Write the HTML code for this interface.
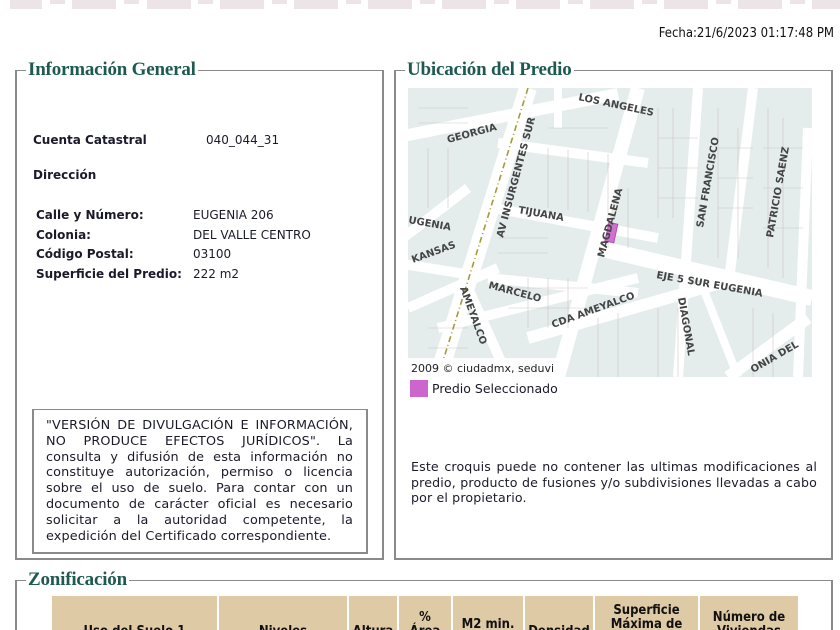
<!DOCTYPE html>
<html><head><meta charset="utf-8">
<style>
*{margin:0;padding:0;box-sizing:border-box}
html,body{width:840px;height:630px;overflow:hidden}
body{background:#fff;position:relative;font-family:"DejaVu Sans","Liberation Sans",sans-serif;font-size:12px;color:#1a1a2a}
.a{position:absolute}
.box{position:absolute;border:2px solid #8a8a8a;border-top-width:1px}
.lg{position:absolute;background:#fff;font-family:"Liberation Serif",serif;font-weight:bold;font-size:19px;color:#1e5a52;padding:0 2px;line-height:18px;letter-spacing:-0.2px}
.band{position:absolute;top:0;height:9px;background:#ece4e6}
b{font-weight:bold}
.j{text-align:justify;line-height:15.6px;font-size:12.6px}
th{background:#dfcaa6;font-family:"DejaVu Sans Condensed","DejaVu Sans",sans-serif;font-weight:bold;font-size:13px;color:#111;text-align:center;vertical-align:middle;line-height:14px}
</style></head><body>
<div class="band" style="left:10px;width:32px"></div>
<div class="band" style="left:50px;width:15px;height:4px"></div>
<div class="band" style="left:72px;width:44px"></div>
<div class="band" style="left:124px;width:15px;height:4px"></div>
<div class="band" style="left:147px;width:44px"></div>
<div class="band" style="left:198px;width:15px;height:4px"></div>
<div class="band" style="left:220px;width:44px"></div>
<div class="band" style="left:272px;width:15px;height:4px"></div>
<div class="band" style="left:294px;width:44px"></div>
<div class="band" style="left:346px;width:15px;height:4px"></div>
<div class="band" style="left:368px;width:44px"></div>
<div class="band" style="left:420px;width:15px;height:4px"></div>
<div class="band" style="left:442px;width:44px"></div>
<div class="band" style="left:494px;width:15px;height:4px"></div>
<div class="band" style="left:516px;width:44px"></div>
<div class="band" style="left:568px;width:15px;height:4px"></div>
<div class="band" style="left:590px;width:44px"></div>
<div class="band" style="left:642px;width:15px;height:4px"></div>
<div class="band" style="left:664px;width:44px"></div>
<div class="band" style="left:716px;width:15px;height:4px"></div>
<div class="band" style="left:738px;width:44px"></div>
<div class="band" style="left:790px;width:15px;height:4px"></div>
<div class="band" style="left:812px;width:28px"></div>

<div class="a" style="right:6px;top:26px;font-family:'DejaVu Sans Condensed','DejaVu Sans',sans-serif;font-size:13px;color:#111">Fecha:21/6/2023 01:17:48 PM</div>

<div class="box" style="left:15px;top:70px;width:369px;height:490px"></div>
<div class="lg" style="left:26px;top:61px">Información General</div>
<div class="box" style="left:394px;top:70px;width:439px;height:490px"></div>
<div class="lg" style="left:405px;top:61px">Ubicación del Predio</div>

<div class="a" style="left:33px;top:133px"><b>Cuenta Catastral</b></div>
<div class="a" style="left:206px;top:133px">040_044_31</div>
<div class="a" style="left:33px;top:168px"><b>Dirección</b></div>
<div class="a" style="left:36px;top:206px;line-height:19.5px"><b>Calle y Número:</b><br><b>Colonia:</b><br><b>Código Postal:</b><br><b>Superficie del Predio:</b></div>
<div class="a" style="left:193px;top:206px;line-height:19.5px">EUGENIA 206<br>DEL VALLE CENTRO<br>03100<br>222 m2</div>

<div class="a" style="left:32px;top:409px;width:336px;height:145px;border:2px solid #8a8a8a;border-top-width:1px"></div>
<div class="a j" style="left:46px;top:418px;width:307px;font-size:12.8px;letter-spacing:0.15px;line-height:15.8px">"VERSIÓN DE DIVULGACIÓN E INFORMACIÓN, NO PRODUCE EFECTOS JURÍDICOS". La consulta y difusión de esta información no constituye autorización, permiso o licencia sobre el uso de suelo. Para contar con un documento de carácter oficial es necesario solicitar a la autoridad competente, la expedición del Certificado correspondiente.</div>

<svg class="a" style="left:408px;top:88px" width="404" height="289" viewBox="0 0 404 289">
<rect width="404" height="289" fill="#e4ecec"/>
<g stroke="#fff" fill="none" stroke-linecap="butt">
<path d="M-5 48 L210 6" stroke-width="12"/>
<path d="M60 100 L-5 150" stroke-width="10"/>
<path d="M-5 176 L70 188" stroke-width="10"/>
<path d="M0 220 L90 180" stroke-width="10"/>
<path d="M120 0 L30 289" stroke-width="18"/>
<path d="M85 120 L250 150" stroke-width="10"/>
<path d="M90 55 L240 75" stroke-width="10"/>
<path d="M230 0 L150 289" stroke-width="14"/>
<path d="M80 190 L230 205" stroke-width="10"/>
<path d="M190 160 L404 210" stroke-width="16"/>
<path d="M30 240 L230 190" stroke-width="10"/>
<path d="M120 250 L330 190" stroke-width="12"/>
<path d="M290 0 L270 289" stroke-width="10"/>
<path d="M345 0 L320 200" stroke-width="10"/>
<path d="M400 40 L390 289" stroke-width="10"/>
<path d="M60 200 L100 289" stroke-width="10"/>
<path d="M295 200 L330 289" stroke-width="8"/>
<path d="M400 230 L320 289" stroke-width="12"/>
<path d="M150 0 L150 40" stroke-width="8"/>
</g>
<g stroke="#c9b8b8" stroke-width="0.6" fill="none" opacity="0.8">
<path d="M10 20 H60 M10 35 H60 M140 40 H200 M140 60 V120 M160 62 V122 M180 64 V124 M200 66 V126 M250 20 V130 M265 20 V130 M310 20 V170 M330 40 V170 M360 20 V180 M375 30 V190 M250 50 H290 M250 80 H290 M250 110 H290 M310 60 H345 M310 90 H345 M310 120 H345 M355 60 H395 M355 100 H395 M355 140 H395 M100 200 H180 M100 220 H180 M120 190 V240 M140 190 V240 M160 190 V240 M20 240 H60 M20 260 H60 M250 220 V289 M270 220 V289 M190 230 V289 M210 225 V289 M345 220 V289 M365 225 V289 M90 150 H140 M90 165 H140 M20 60 V120 M40 60 V120 M200 100 V160 M220 100 V160"/>
</g>
<path d="M120 0 L30 289" stroke="#a49a3a" stroke-width="1.6" stroke-dasharray="6 3 1 3" fill="none"/>
<rect x="199" y="135" width="9" height="19" fill="#d070d0" stroke="#b050b0" transform="rotate(12 203 144)"/>
<g font-family="DejaVu Sans,sans-serif" font-size="10" fill="#444" font-weight="bold">
<text x="170" y="12" transform="rotate(12 170 12)">LOS ANGELES</text>
<text x="40" y="55" transform="rotate(-15 40 55)">GEORGIA</text>
<text x="95" y="150" transform="rotate(-75 95 150)">AV INSURGENTES SUR</text>
<text x="110" y="125" transform="rotate(10 110 125)">TIJUANA</text>
<text x="196" y="170" transform="rotate(-75 196 170)">MAGDALENA</text>
<text x="295" y="140" transform="rotate(-80 295 140)">SAN FRANCISCO</text>
<text x="365" y="150" transform="rotate(-80 365 150)">PATRICIO SAENZ</text>
<text x="0" y="135" transform="rotate(10 0 135)">UGENIA</text>
<text x="5" y="175" transform="rotate(-20 5 175)">KANSAS</text>
<text x="52" y="200" transform="rotate(70 52 200)">AMEYALCO</text>
<text x="80" y="200" transform="rotate(15 80 200)">MARCELO</text>
<text x="145" y="240" transform="rotate(-20 145 240)">CDA AMEYALCO</text>
<text x="248" y="190" transform="rotate(10 248 190)">EJE 5 SUR EUGENIA</text>
<text x="270" y="210" transform="rotate(80 270 210)">DIAGONAL</text>
<text x="345" y="285" transform="rotate(-30 345 285)">ONIA DEL</text>
</g>
<rect x="0" y="270" width="150" height="19" fill="#fff" opacity="0.9"/>
<text x="3" y="284" font-family="DejaVu Sans,sans-serif" font-size="11" fill="#222">2009 © ciudadmx, seduvi</text>
</svg>
<div class="a" style="left:410px;top:380px;width:18px;height:17px;background:#cc66cc"></div>
<div class="a" style="left:432px;top:381px;font-size:12.5px">Predio Seleccionado</div>

<div class="a j" style="left:411px;top:459px;width:406px;letter-spacing:0.15px">Este croquis puede no contener las ultimas modificaciones al predio, producto de fusiones y/o subdivisiones llevadas a cabo por el propietario.</div>

<div class="a" style="left:15px;top:568px;width:818px;height:62px;overflow:hidden">
<div class="box" style="left:0;top:12px;width:818px;height:80px"></div>
<div class="lg" style="left:11px;top:3px">Zonificación</div>
<table class="a" style="left:35px;top:26px;border-collapse:separate;border-spacing:2px" >
<tr style="height:72px">
<th style="width:165px">Uso del Suelo 1</th>
<th style="width:128px">Niveles</th>
<th style="width:48px">Altura</th>
<th style="width:52px">%<br>Área<br>Libre</th>
<th style="width:70px">M2 min.<br>Vivienda</th>
<th style="width:68px">Densidad</th>
<th style="width:103px">Superficie Máxima de Construcción (m2)</th>
<th style="width:98px">Número de Viviendas Permitidas</th>
</tr></table>
</div>
</body></html>
